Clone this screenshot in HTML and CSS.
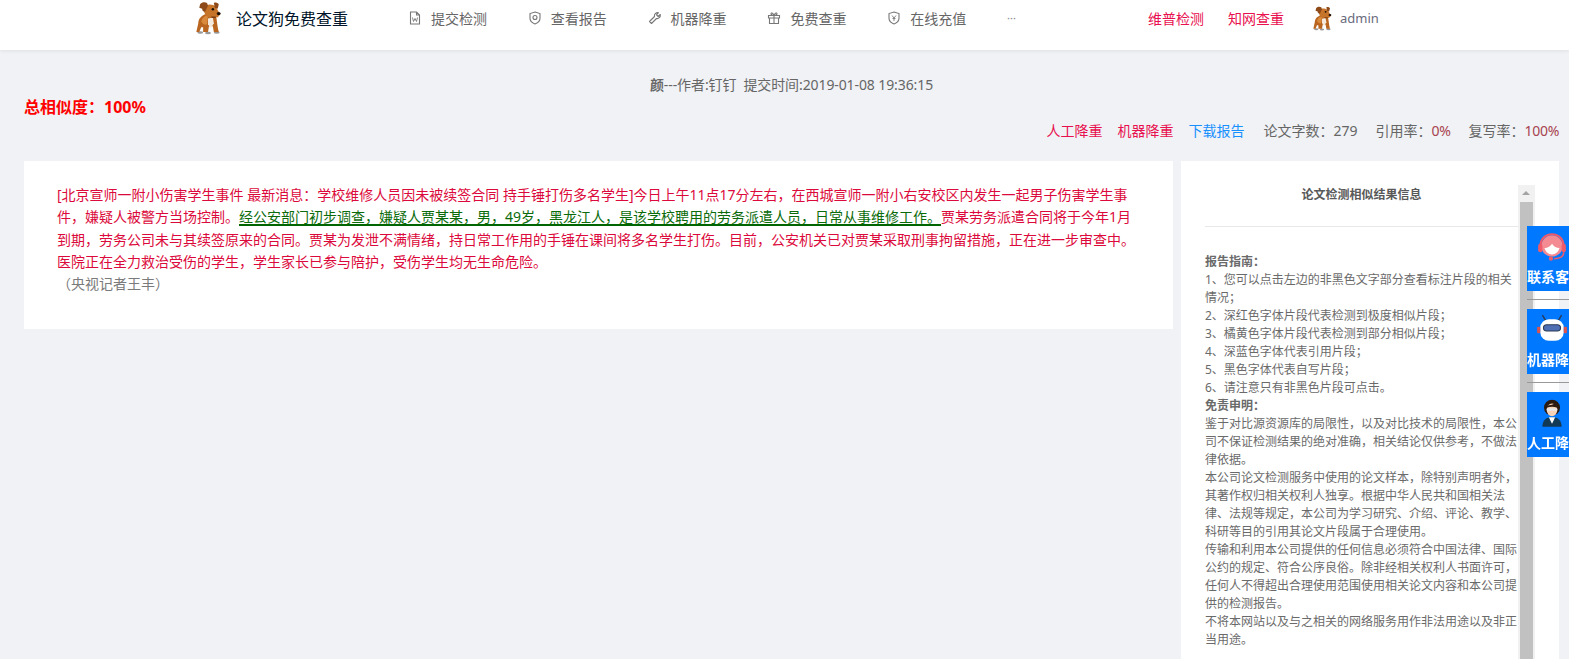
FILE: index.html
```html
<!DOCTYPE html>
<html lang="zh-CN">
<head>
<meta charset="utf-8">
<title>论文狗免费查重</title>
<link rel="stylesheet" href="styles.css">
</head>
<body>
<svg class="defs" width="0" height="0">
  <symbol id="dog" viewBox="0 0 30 36">
    <ellipse cx="7" cy="33.500" rx="3" ry="1.300" fill="#555" opacity=".6"/>
    <ellipse cx="15" cy="34" rx="3" ry="1.300" fill="#555" opacity=".6"/>
    <ellipse cx="24" cy="33.500" rx="3" ry="1.300" fill="#555" opacity=".6"/>
    <path d="M5 24c0-5 4-9 10-10 5-.5 9 2 9 7l1 7 1 5h-5l-1-6-4 0-1 6h-5l0-5-2 0-2 5H3z" fill="#b9651f"/>
    <path d="M8 22c1-4 4-6 7-6l-1 9c-2 1-4 0-6-3z" fill="#d98a3c"/>
    <path d="M15 19l5-1 1 6-3 5-3-4z" fill="#f3e9dc"/>
    <path d="M11 7c3-3 9-3 12 0l3 5c2 2 1 5-2 6h-5c-4 0-7-2-8-6z" fill="#c6742a"/>
    <path d="M7 4c2-2 5-2 7-1l1 3-3 6c-2 0-3-1-3-3L6 8z" fill="#8d4a18"/>
    <path d="M21 3c2-1 5 0 5 2l-1 4-3-1z" fill="#8d4a18"/>
    <circle cx="20" cy="9.500" r="1.300" fill="#1a0f08"/>
    <ellipse cx="26" cy="14" rx="2" ry="1.600" fill="#1a0f08"/>
    <path d="M18 17h5v1.500h-4z" fill="#7a3d14"/>
  </symbol>
</svg>

<header class="topbar">
  <div class="topbar-inner">
    <svg class="logo"><use href="#dog"/></svg>
    <span class="brand">论文狗免费查重</span>
    <nav class="nav">
      <a class="nav-item">
        <svg class="nav-icon" viewBox="0 0 14 14"><path d="M2.500 1h6l3 3v9h-9zM8.500 1v3h3" fill="none" stroke="#777" stroke-width="1.100"/><path d="M4.500 6.500l1 4 1.500-3 1.500 3 1-4" fill="none" stroke="#777" stroke-width=".9"/></svg>
        提交检测
      </a>
      <a class="nav-item">
        <svg class="nav-icon" viewBox="0 0 14 14"><path d="M7 1l5 1.600v4.600C12 10 9.500 12 7 13 4.500 12 2 10 2 7.200V2.600z" fill="none" stroke="#777" stroke-width="1.100"/><circle cx="7" cy="6.500" r="2" fill="none" stroke="#777" stroke-width="1.100"/></svg>
        查看报告
      </a>
      <a class="nav-item">
        <svg class="nav-icon" viewBox="0 0 14 14"><path d="M1.500 10.500L6.500 5.500C6 3.500 7.800 1.300 10.500 1.700L8.500 3.800l1.700 1.700 2.100-2C12.700 6.200 10.500 8 8.500 7.500L3.500 12.500z" fill="none" stroke="#777" stroke-width="1.100" stroke-linejoin="round"/></svg>
        机器降重
      </a>
      <a class="nav-item">
        <svg class="nav-icon" viewBox="0 0 14 14"><path d="M1.500 4.500h11v2.500h-11zM2.500 7h9v5.500h-9zM7 4.500v8M7 4.500C5 4.500 4 3.800 4 2.800 4 1.500 6 1.300 7 4.500 8 1.300 10 1.500 10 2.800 10 3.800 9 4.500 7 4.500" fill="none" stroke="#777" stroke-width="1.100"/></svg>
        免费查重
      </a>
      <a class="nav-item">
        <svg class="nav-icon" viewBox="0 0 14 14"><path d="M7 1l5 1.600v4.600C12 10 9.500 12 7 13 4.500 12 2 10 2 7.200V2.600z" fill="none" stroke="#777" stroke-width="1.100"/><path d="M5 4.500L7 7l2-2.500M7 7v3M5.500 7.500h3" fill="none" stroke="#777" stroke-width=".9"/></svg>
        在线充值
      </a>
      <a class="nav-more">···</a>
    </nav>
    <div class="userbar">
      <a class="hot-link">维普检测</a>
      <a class="hot-link">知网查重</a>
      <svg class="avatar"><use href="#dog"/></svg>
      <span class="username">admin</span>
    </div>
  </div>
</header>

<main class="page">
  <p class="meta"><b>颜</b>---作者:钉钉&nbsp;&nbsp;提交时间:2019-01-08 19:36:15</p>
  <h1 class="score">总相似度：100%</h1>
  <div class="stats">
    <a class="stat-red">人工降重</a>
    <a class="stat-red">机器降重</a>
    <a class="stat-blue">下载报告</a>
    <span class="stat-text">论文字数：279</span>
    <span class="stat-text">引用率：<i class="stat-val">0%</i></span>
    <span class="stat-text">复写率：<i class="stat-val">100%</i></span>
  </div>
  <div class="columns">
    <article class="paper">
      <p class="paper-text">[北京宣师一附小伤害学生事件 最新消息：学校维修人员因未被续签合同 持手锤打伤多名学生]今日上午11点17分左右，在西城宣师一附小右安校区内发生一起男子伤害学生事<br>件，嫌疑人被警方当场控制。<span class="quoted">经公安部门初步调查，嫌疑人贾某某，男，49岁，黑龙江人，是该学校聘用的劳务派遣人员，日常从事维修工作。</span>贾某劳务派遣合同将于今年1月<br>到期，劳务公司未与其续签原来的合同。贾某为发泄不满情绪，持日常工作用的手锤在课间将多名学生打伤。目前，公安机关已对贾某采取刑事拘留措施，正在进一步审查中。<br>医院正在全力救治受伤的学生，学生家长已参与陪护，受伤学生均无生命危险。</p>
      <p class="paper-source">（央视记者王丰）</p>
    </article>
    <aside class="side">
      <div class="side-body">
        <h2 class="side-title">论文检测相似结果信息</h2>
        <hr class="side-rule">
        <div class="side-text">
          <b>报告指南：</b><br>
          1、您可以点击左边的非黑色文字部分查看标注片段的相关情况；<br>
          2、深红色字体片段代表检测到极度相似片段；<br>
          3、橘黄色字体片段代表检测到部分相似片段；<br>
          4、深蓝色字体代表引用片段；<br>
          5、黑色字体代表自写片段；<br>
          6、请注意只有非黑色片段可点击。<br>
          <b>免责申明：</b><br>
          鉴于对比源资源库的局限性，以及对比技术的局限性，本公司不保证检测结果的绝对准确，相关结论仅供参考，不做法律依据。<br>
          本公司论文检测服务中使用的论文样本，除特别声明者外，其著作权归相关权利人独享。根据中华人民共和国相关法律、法规等规定，本公司为学习研究、介绍、评论、教学、科研等目的引用其论文片段属于合理使用。<br>
          传输和利用本公司提供的任何信息必须符合中国法律、国际公约的规定、符合公序良俗。除非经相关权利人书面许可，任何人不得超出合理使用范围使用相关论文内容和本公司提供的检测报告。<br>
          不将本网站以及与之相关的网络服务用作非法用途以及非正当用途。
        </div>
      </div>
      <div class="scrollbar">
        <div class="scroll-btn"></div>
        <div class="scroll-thumb"></div>
      </div>
    </aside>
  </div>
</main>

<div class="float-bar">
  <a class="float-btn">
    <svg class="float-icon" viewBox="0 0 30 30"><circle cx="15" cy="14" r="10" fill="#f48b93"/><path d="M8 16c3 0 6-2 7-4 2 3 4 4 7 4-1 4-4 6-7 6s-6-2-7-6z" fill="#fff"/><path d="M4 15C4 7 9 3 15 3s11 4 11 12" fill="none" stroke="#ef5a68" stroke-width="2"/><rect x="2" y="12" width="4" height="8" rx="2" fill="#ef5a68"/><rect x="24" y="12" width="4" height="8" rx="2" fill="#ef5a68"/><path d="M26 20c0 4-4 6-9 6" fill="none" stroke="#ef5a68" stroke-width="1.500"/><circle cx="14" cy="26" r="2" fill="#ef5a68"/></svg>
    <span>联系客服</span>
  </a>
  <div class="float-sep"></div>
  <a class="float-btn">
    <svg class="float-icon" viewBox="0 0 30 30"><path d="M9 6L6 1M21 6l3-5" stroke="#2b3a55" stroke-width="1.300"/><rect x="4" y="5" width="22" height="20" rx="8" fill="#fff"/><rect x="7" y="10" width="16" height="6" rx="3" fill="#4f6fb5" stroke="#2b3a55"/><rect x="1" y="12" width="3" height="6" rx="1" fill="#d9534f"/><rect x="26" y="12" width="3" height="6" rx="1" fill="#d9534f"/></svg>
    <span>机器降重</span>
  </a>
  <div class="float-sep"></div>
  <a class="float-btn">
    <svg class="float-icon" viewBox="0 0 30 30"><path d="M6 28c0-6 3-9 9-9s9 3 9 9z" fill="#123a55"/><path d="M12 19l3 6 3-6z" fill="#fff"/><circle cx="15" cy="10" r="7.500" fill="#2a1a10"/><ellipse cx="15" cy="12" rx="5" ry="6" fill="#f6d3b8"/><path d="M10 8c3 0 7-1 9-3l1 5c-3-1-7-1-10 0z" fill="#2a1a10"/><rect x="10" y="10.500" width="10" height="2.500" rx="1" fill="#e8e8e8"/></svg>
    <span>人工降重</span>
  </a>
</div>
</body>
</html>
```

FILE: styles.css
```css
* { box-sizing: border-box; }
html, body {
  margin: 0;
  height: 659px;
  overflow: hidden;
}
body {
  background: #f0f2f5;
  font-family: "Noto Sans", "Noto Sans CJK SC", sans-serif;
  font-size: 14px;
  color: #595959;
}
.defs { position: absolute; }
.topbar {
  height: 50px;
  background: #fff;
  box-shadow: 0 1px 4px rgba(0, 21, 41, .08);
}
.topbar-inner {
  height: 35px;
  display: flex;
  align-items: center;
  padding-left: 193px;
}
.logo { width: 30px; height: 35px; flex: none; }
.brand {
  width: 172px;
  margin-left: 13px;
  font-size: 16px;
  color: #001529;
  white-space: nowrap;
}
.nav { display: flex; align-items: center; width: 740px; }
.nav-item {
  width: 119.800px;
  display: flex;
  align-items: center;
  white-space: nowrap;
  color: #666;
}
.nav-icon { width: 14px; height: 14px; margin-right: 9px; flex: none; }
.nav-more { color: #888; font-size: 11px; }
.userbar { display: flex; align-items: center; }
.hot-link { color: #e8104f; margin-right: 24px; white-space: nowrap; }
.avatar { width: 22px; height: 26px; margin-left: 3px; }
.username { margin-left: 7px; font-size: 13px; color: #6a6a7c; }

.page { padding: 24px 10px 0 24px; }
.meta {
  margin: 0;
  height: 22px;
  line-height: 22px;
  text-align: center;
  font-size: 14px;
  letter-spacing: -.1px;
  color: #666;
}
.score {
  margin: 0;
  height: 23px;
  line-height: 23px;
  font-size: 16px;
  font-weight: 700;
  color: #f00;
}
.stats {
  display: flex;
  justify-content: flex-end;
  align-items: center;
  gap: 15px;
  height: 22px;
  white-space: nowrap;
}
.stat-red { color: #e8104f; }
.stat-blue { color: #1890ff; margin-right: 1px; }
.stat-text { color: #666; margin-left: 3px; }
.stat-val { font-style: normal; color: #a8434f; letter-spacing: -.3px; }

.columns {
  display: flex;
  align-items: flex-start;
  gap: 8px;
  margin-top: 20px;
}
.paper {
  width: 1149px;
  height: 168px;
  background: #fff;
  padding: 23px 10px 0 33px;
}
.paper-text, .paper-source { margin: 0; line-height: 22.300px; }
.paper-text { color: #dc0a3c; }
.paper-source { color: #7a7a7a; }
.quoted {
  color: #0b6b0b;
  text-decoration: underline;
  text-decoration-color: #006400;
  text-decoration-thickness: 1.500px;
  text-underline-offset: 2px;
}
.side {
  width: 378px;
  height: 500px;
  background: #fff;
  display: flex;
  align-items: stretch;
  padding: 24px 24px 0 24px;
}
.side-body { width: 313px; flex: none; }
.side-title {
  margin: 0;
  height: 20px;
  line-height: 20px;
  font-size: 12px;
  font-weight: 700;
  text-align: center;
  color: #595959;
}
.side-rule {
  margin: 21px 0 26px;
  border: 0;
  border-top: 1px solid #e8e8e8;
}
.side-text {
  font-size: 12px;
  line-height: 18px;
  color: #6a6a6a;
}
.scrollbar {
  width: 17px;
  background: #f1f1f1;
  display: flex;
  flex-direction: column;
  align-items: center;
}
.scroll-btn {
  height: 17px;
  width: 100%;
  position: relative;
}
.scroll-btn::after {
  content: "";
  position: absolute;
  left: 4px;
  top: 6px;
  border-left: 4px solid transparent;
  border-right: 4px solid transparent;
  border-bottom: 4px solid #a3a3a3;
}
.scroll-thumb { flex: 1; width: 13px; background: #c1c1c1; }

.float-bar {
  position: fixed;
  left: 1527px;
  top: 226px;
  width: 42px;
  overflow: hidden;
}
.float-btn {
  display: block;
  height: 65px;
  padding-top: 5px;
  background: #0078ff;
  color: #fff;
  font-weight: 700;
  font-size: 14px;
  line-height: 20px;
  white-space: nowrap;
}
.float-icon {
  display: block;
  width: 32px;
  height: 32px;
  margin-left: 9px;
}
.float-btn span { display: block; margin-top: 4px; }
.float-sep {
  height: 18px;
  position: relative;
}
.float-sep::after {
  content: "";
  position: absolute;
  left: 0;
  right: 0;
  top: 8px;
  border-top: 1px solid #999;
}
```
